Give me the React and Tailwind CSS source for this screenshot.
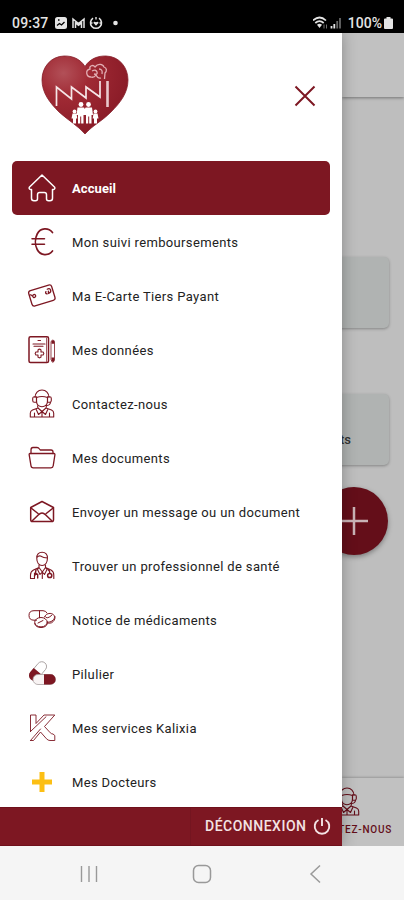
import React from 'react';

const Icon = ({ children, width = 1.1 }) => (
  <svg
    viewBox="0 0 30 30"
    className="w-[30px] h-[30px] shrink-0"
    fill="none"
    stroke="currentColor"
    strokeWidth={width}
    strokeLinecap="round"
    strokeLinejoin="round"
  >
    {children}
  </svg>
);

const HomeIcon = () => (
  <Icon width={1.5}>
    <path d="M2.300 14.200 15 2l12.700 12.200q.6 2-1.200 2.300H25.500v8.700q0 2.500-2.500 2.500h-1.500q-2 0-2-2v-4q0-2.200-2.200-2.200h-4.600q-2.200 0-2.200 2.200v4q0 2-2 2H7q-2.500 0-2.500-2.500v-8.700H3.500q-1.800-.3-1.200-2.300Z" />
  </Icon>
);

const EuroIcon = () => (
  <Icon width={1.7}>
    <path d="M25.500 5.500C21.500.500 13.500.500 10.200 7c-2.300 4.500-2.300 11 0 15.500C13.500 29 21.500 29 25.500 24" />
    <path d="M5 11.700h12.500M5 17.300h12.500" strokeWidth="1.500" />
  </Icon>
);

const CardIcon = () => (
  <Icon width={1.3}>
    <g transform="rotate(-17 15 15)">
      <rect x="3" y="6.500" width="24" height="16" rx="2.500" />
      <circle cx="7.500" cy="12.700" r="1.500" />
      <path d="M4 10.500q1.500.2 1.500 1.500M20.500 14.500q-2-1-.5-2.500M22 10q2.500-.8 3 1.500.200 2.700-3 3l.5-2.300" />
    </g>
  </Icon>
);

const RecordIcon = () => (
  <Icon>
    <rect x="2" y="1.800" width="19.500" height="25.700" rx="1.500" strokeWidth="1.500" />
    <path d="M19.500 3v23.500" strokeWidth=".7" />
    <path d="M11 5.500h2.500M6 9h12M7 11.200h9" />
    <path d="M11 14.800q1.500-1.300 3 0v2.200h2.200q1.300 1.500 0 3H14v2.200q-1.500 1.300-3 0V20H8.800q-1.300-1.500 0-3H11Z" />
    <path d="M24.200 6.500q1.600-3 3.300 0V25l-1.700 2.500-1.600-2.500Z" strokeWidth=".8" />
    <path d="M25.900 5.500v3.200M25.900 22.500v4" strokeWidth="2.800" strokeLinecap="butt" />
  </Icon>
);

const SupportIcon = () => (
  <Icon>
    <path d="M8 8.500C8 4 11 1 15 1s7 3 7 7.500" />
    <path d="M9.500 8.500Q15 6.500 20.500 8.500V12c0 3.500-2.500 5.700-5.500 5.700S9.500 15.500 9.500 12Z" />
    <path d="M9.500 7.800H7.300q-1.600 0-1.600 1.800v1.800q0 1.800 1.600 1.800h2.200ZM20.500 7.800h2.200q1.600 0 1.600 1.800v1.800q0 1.800-1.600 1.800h-2.200ZM23.500 13.500q-.5 3.300-5 3" />
    <path d="M10.500 16.700 11 19l-5.500 2q-2.200 1-2.200 3.200V28h23.400v-3.800q0-2.200-2.200-3.200L19 19l.5-2.300M11 19l4 3.500 4-3.500M9 20l2.500 5.500 3.500-3 3.500 3L21 20M7.500 24v4M22.500 24v4M15 23v5" />
  </Icon>
);

const FolderIcon = () => (
  <Icon width={1.3}>
    <path d="M4 10.500V7q0-2.500 2-2.500h4q1.500 0 2.500 1.500l.7 1H24q2 0 2 2v1.500" />
    <path d="M3 10.500h24q1 0 .9 1.300l-1.700 11q-.2 2-2.200 2H6.200q-2 0-2.200-2L2.200 11.800Q2 10.500 3 10.500Z" />
  </Icon>
);

const MailIcon = () => (
  <Icon width={1.5}>
    <path d="M3.700 10.500 15 4.500l11.500 6v12.300q0 1.800-1.800 1.800H5.500q-1.800 0-1.800-1.800Z" />
    <path d="m4 11 7 5.500M26.200 11l-7 5.500M5.500 23.500l6-5.700q3.500-3.800 7 0l6 5.700" />
  </Icon>
);

const DoctorIcon = () => (
  <Icon>
    <path d="M9.800 7.500c-.5-4 2-6.300 5.300-6.300s5.800 2.300 5.300 6.300c0 4-2 7-5.300 7s-5.300-3-5.300-7ZM10 6.500q1.500-2 3.500-1.500 3 2 7 2" />
    <path d="M12 14v2.500L6.500 19Q3.500 20.500 3.500 24v3.500M18.500 14v2.500L24 19q2.800 1.500 2.800 5v3.500M12 16.500l3.300 4.500 3.200-4.500M12 16.500l-1.500 2 2.500 5 2.300-2.500 2.200 2.500 2.500-5-1.500-2M15.300 21v6.500M3.500 27.500h4M7.500 22v5.500" />
    <circle cx="22.700" cy="24.500" r="2.100" strokeWidth="1.500" />
    <path d="M21 18.500q2 1 1.700 3.500M9 18.500q-.5 2.500-.3 4M7.500 25l1.200-2.500 2 1V27" strokeWidth="1.400" />
  </Icon>
);

const TabletsIcon = () => (
  <Icon width={1}>
    <path d="M9.500 15.200H7q-5 0-5-4.800 0-4.700 5-4.700h9q3 0 4 2.300M12.500 5.700v7" />
    <ellipse cx="14" cy="17.200" rx="6.300" ry="4.700" />
    <path d="M7.700 18.500c0 5.500 12.600 5.500 12.600 0M11 18l5-2.500M17.500 12c1-3 5-4.500 8-3s2.500 5-.5 7-4.500 1-4.500 1M18 11.500q2 3.500 7-1.500M28 11.500q.5 4-3.500 6.300-2 .700-4 .2" />
  </Icon>
);

const PillsIcon = () => (
  <svg viewBox="0 0 30 30" className="w-[30px] h-[30px] shrink-0">
    <g transform="rotate(-50 12 12)">
      <rect x="1" y="6.500" width="21" height="9.500" rx="4.700" fill="#fff" stroke="#a8a0a0" strokeWidth=".9" />
      <path d="M11 6H5.500a5.200 5.200 0 0 0 0 10.500H11Z" fill="#7d1722" />
    </g>
    <rect x="6" y="15.500" width="22.500" height="10" rx="5" fill="#f8f3f3" stroke="#a8a0a0" strokeWidth=".8" />
    <path d="M17 15.300h6.500a5.100 5.100 0 0 1 0 10.200H17Z" fill="#7d1722" />
  </svg>
);

const KalixiaIcon = () => (
  <Icon width={0.9}>
    <path d="M3.500 18.500V2H9v8.500L17 2h10.800L17.500 13.500l5.800 6.300q1 1.200 2.700 1.200l1.800 1.500v5H23q-2 0-3.500-1.700L13.500 19l-7 8.500h-3" />
    <path d="M3.500 18.500 19 3.800M3.500 27.500l10-11.500" />
  </Icon>
);

const PlusIcon = () => (
  <Icon>
    <path d="M15 5v20M5 15h20" stroke="#fcbf14" strokeWidth="5" strokeLinecap="butt" />
  </Icon>
);

const menu = [
  { label: 'Mon suivi remboursements', icon: EuroIcon },
  { label: 'Ma E-Carte Tiers Payant', icon: CardIcon },
  { label: 'Mes données', icon: RecordIcon },
  { label: 'Contactez-nous', icon: SupportIcon },
  { label: 'Mes documents', icon: FolderIcon },
  { label: 'Envoyer un message ou un document', icon: MailIcon },
  { label: 'Trouver un professionnel de santé', icon: DoctorIcon },
  { label: 'Notice de médicaments', icon: TabletsIcon },
  { label: 'Pilulier', icon: PillsIcon },
  { label: 'Mes services Kalixia', icon: KalixiaIcon },
  { label: 'Mes Docteurs', icon: PlusIcon },
];

const StatusBar = () => (
  <div className="h-[33px] shrink-0 bg-black text-[#e4e4e4] flex items-end justify-between pl-[12px] pr-[11px] pb-[2px]">
    <div className="flex items-center h-[16px]">
      <span className="text-[14px] leading-4 font-medium tracking-[0.2px] w-[43px]">09:37</span>
      <svg viewBox="0 0 66 16" className="w-[66px] h-4" fill="none" stroke="currentColor">
        <rect x="0" y="2" width="12" height="12" rx="2.500" fill="currentColor" stroke="none" />
        <path d="m2 10.500 2.500-2 2 1.500 3-3M3 5h1.500" stroke="#000" strokeWidth="1.300" />
        <path d="M18 13V4l5.500 4.500L29 4v9M20.500 13V8l3 2.300 3-2.300v5" strokeWidth="1.500" />
        <path d="M38 3.200a5.500 5.500 0 1 0 6 0" strokeWidth="1.600" />
        <path d="M35.500 8h2M46.500 8h-2M41 2v2.500" strokeWidth="1.400" />
        <path d="M41 10.700 38.500 8q0-2 2.500-.8 2.500-1.200 2.500.8Z" fill="currentColor" stroke="none" />
        <circle cx="60.500" cy="8" r="2.300" fill="currentColor" stroke="none" />
      </svg>
    </div>
    <div className="flex items-center h-[16px]">
      <svg viewBox="0 0 34 16" className="w-[34px] h-4 mr-px" fill="none" stroke="currentColor">
        <path d="M0 5.500q6.500-6 13 0M2.300 8q4.200-3.800 8.400 0" strokeWidth="1.700" />
        <path d="M4 9.700q2.500-2 5 0L6.500 13Z" fill="currentColor" stroke="none" />
        <path d="M11 9.500v4M13.500 9.500v4" strokeWidth="1" opacity=".5" />
        <path d="M18.500 11v2.500M21.300 9v4.500" strokeWidth="1.800" />
        <path d="M24.200 6v7.500M27 3v10.500" strokeWidth="1.800" opacity=".45" />
      </svg>
      <span className="text-[14px] leading-4 font-medium">100%</span>
      <svg viewBox="0 0 9 12" className="w-[9px] h-3 ml-[2px]" fill="currentColor">
        <path d="M2.500 0h4v1.500H8q1 0 1 1V11q0 1-1 1H1q-1 0-1-1V2.500q0-1 1-1h1.500Z" />
      </svg>
    </div>
  </div>
);

const Logo = () => (
  <svg viewBox="0 0 88 80" className="w-[88px] h-20" fill="none">
    <defs>
      <radialGradient id="heart" cx=".25" cy=".22" r=".75">
        <stop offset="0" stopColor="#b25058" />
        <stop offset=".4" stopColor="#a02a34" />
        <stop offset="1" stopColor="#8b1c28" />
      </radialGradient>
    </defs>
    <path
      d="M44 11.500C49 3.500 57 .8 65 1c13 .3 22 11 22 24 0 13-8 23-17 32C60 67 52 70 44 79 36 70 28 66 18 57 9 48 1 38 1 25 1 12 10 1.300 23 1c8-.2 16 2.500 21 10.500Z"
      fill="url(#heart)"
      stroke="#86202b"
      strokeWidth=".8"
    />
    <path d="M15.500 51V32l15 12V32l14.500 11V32l14 10V26" stroke="#f5e6e7" strokeWidth="1.700" />
    <path d="M66.500 26v26" stroke="#e9c9cc" strokeWidth="2.600" />
    <path
      d="M50 22c-5 0-6-7-1-8-1-3 3-5 5-2 3-4 8-3 9 0 3 1 3 4 1 6l-.5 6M50 22q3 1 5-2 2 4 5 3M51 16q4-2 5 1t-3 2M58 14q4 0 3 5"
      stroke="#e2aeb3"
      strokeWidth="1.300"
    />
    <g fill="#fff">
      <circle cx="40" cy="49.500" r="2.400" />
      <circle cx="47.500" cy="49.500" r="2.400" />
      <circle cx="33.500" cy="56.500" r="1.900" />
      <circle cx="54.500" cy="56.500" r="1.900" />
      <path d="M36.500 52.500h6.500l.8 1.500.8-1.500H51L52 60h-1.500v8.500h-2.300v-7h-1v7H45V60h-2.500v8.500h-2.300v-7h-1v7H37V60h-1.500ZM31.500 58.500h4l.8 5h-1.300v5h-3v-5h-1.500ZM52.500 58.500h4l1 5H56v5h-3v-5h-1.300Z" />
    </g>
  </svg>
);

const Drawer = () => (
  <aside className="w-[341.500px] shrink-0 bg-white flex flex-col z-10 shadow-[0_0_14px_rgba(0,0,0,0.3)]">
    <div className="h-[128px] shrink-0 flex items-start justify-between pl-[41px] pr-[26px] pt-[22px]">
      <Logo />
      <svg viewBox="0 0 22 22" className="w-[22px] h-[22px] mt-[30px]" stroke="#7d1722" strokeWidth="2">
        <path d="m1.500 1.500 19 19M20.500 1.500l-19 19" />
      </svg>
    </div>
    <nav className="flex-1 min-h-0 overflow-hidden pl-[12px] pr-[11.500px]">
      <a className="h-[53.500px] mb-[0.5px] rounded-[5px] bg-[#7d1722] text-white flex items-center gap-[15px] pl-[15px]">
        <HomeIcon />
        <span className="text-[13px] font-bold tracking-[0.1px] pt-px">Accueil</span>
      </a>
      {menu.map(({ label, icon: ItemIcon }) => (
        <a key={label} className="h-[54px] flex items-center gap-[15px] pl-[15px] text-[#7d1722]">
          <ItemIcon />
          <span className="text-[13px] tracking-[0.36px] pt-[2px] text-[#222] whitespace-nowrap">{label}</span>
        </a>
      ))}
    </nav>
    <div className="h-[39.500px] shrink-0 bg-[#7d1722] border-y border-[#6f101b] flex justify-end text-[#f3e3e4]">
      <button className="border-l border-[#741520] w-[152px] flex items-center justify-end gap-[6px] pr-[11px]">
        <span className="text-[14px] font-medium tracking-[0.5px] pt-px">DÉCONNEXION</span>
        <svg viewBox="0 0 18 18" className="w-[18px] h-[18px]" fill="none" stroke="currentColor" strokeWidth="1.900">
          <path d="M5.500 3a7.300 7.300 0 1 0 7 0M9 1v8" />
        </svg>
      </button>
    </div>
  </aside>
);

// The slice of the home screen that stays visible behind the drawer
const HomeBehind = () => (
  <main className="flex-1 min-w-0 overflow-hidden bg-[#bebebe] flex flex-col">
    <div className="h-[64px] shrink-0 bg-[#c1c1c1] shadow-[0_1px_3px_rgba(0,0,0,0.4)]" />
    <div className="flex-1 pt-[160px] flex flex-col items-end pr-[15px]">
      <div className="w-[120px] h-[71px] shrink-0 rounded-[5px] bg-[#b0b3b2] shadow-[0_1px_3px_rgba(0,0,0,0.3)]" />
      <div className="w-[120px] h-[71px] shrink-0 mt-[66px] rounded-[5px] bg-[#b0b3b2] shadow-[0_1px_3px_rgba(0,0,0,0.3)] flex items-center justify-end pr-[38px] pt-[20px]">
        <span className="text-[13px] font-medium text-[#333]">ts</span>
      </div>
      <div className="w-[68px] h-[68px] shrink-0 mt-[22px] mr-px rounded-full bg-[#640e19] shadow-[0_2px_5px_rgba(0,0,0,0.35)] flex items-center justify-center">
        <svg viewBox="0 0 28 28" className="w-7 h-7" stroke="#c9b3b6" strokeWidth="2.500">
          <path d="M14 0v28M0 14h28" />
        </svg>
      </div>
    </div>
    <div className="h-[68px] shrink-0 bg-[#c1c1c1] shadow-[0_-1px_2px_rgba(0,0,0,0.2)] flex flex-col items-end pt-[9px] pr-[12px] text-[#640e19]">
      <div className="w-[90px] flex justify-center">
        <SupportIcon />
      </div>
      <span className="text-[10px] leading-3 font-medium tracking-[0.75px] mt-[7px] whitespace-nowrap">TEZ-NOUS</span>
    </div>
  </main>
);

const NavigationBar = () => (
  <div className="flex-1 bg-[#f5f5f5] flex items-center justify-between pl-[80px] pr-[80px] pt-px">
    <svg viewBox="0 0 18 18" className="w-[18px] h-[18px]" stroke="#999" strokeWidth="1.400">
      <path d="M1.500 1v16M9 1v16M16.500 1v16" />
    </svg>
    <svg viewBox="0 0 20 20" className="w-5 h-5" fill="none" stroke="#999" strokeWidth="1.500">
      <rect x="1.500" y="1.500" width="17" height="17" rx="5" />
    </svg>
    <svg viewBox="0 0 18 20" className="w-[18px] h-5" fill="none" stroke="#999" strokeWidth="1.500">
      <path d="M14 1.500 5 10l9 8.500" />
    </svg>
  </div>
);

const App = () => {
  return (
    <div className="w-full h-screen overflow-hidden flex flex-col font-['Roboto',sans-serif] bg-white">
      <StatusBar />
      <div className="h-[813px] shrink-0 flex overflow-hidden">
        <Drawer />
        <HomeBehind />
      </div>
      <NavigationBar />
    </div>
  );
};

export default App;
